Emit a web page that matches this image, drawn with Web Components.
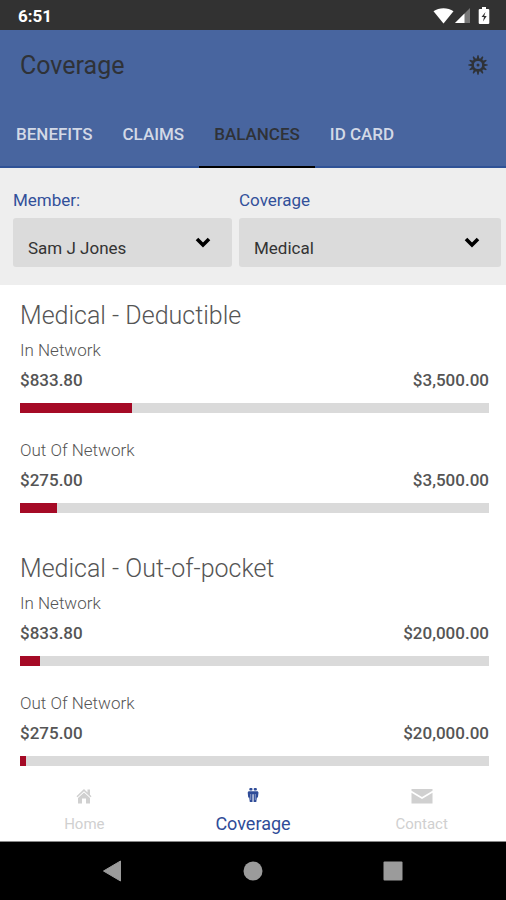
<!DOCTYPE html>
<html lang="en">
<head>
<meta charset="utf-8">
<meta name="viewport" content="width=device-width, initial-scale=1">
<title>Coverage</title>
<style>
  html, body { margin: 0; height: 100%; }
  body { font-family: Roboto, "Liberation Sans", sans-serif; background: #fff; }
</style>
</head>
<body>
<coverage-app>
  <status-bar slot="top" time="6:51"></status-bar>
  <app-header slot="top" heading="Coverage">
    <tab-link>BENEFITS</tab-link>
    <tab-link>CLAIMS</tab-link>
    <tab-link active>BALANCES</tab-link>
    <tab-link>ID CARD</tab-link>
  </app-header>
  <filter-bar slot="top">
    <select-field label="Member:" value="Sam J Jones"></select-field>
    <select-field label="Coverage" value="Medical"></select-field>
  </filter-bar>

  <balance-section heading="Medical - Deductible">
    <balance-meter label="In Network" used="833.80" total="3500"></balance-meter>
    <balance-meter label="Out Of Network" used="275.00" total="3500"></balance-meter>
  </balance-section>
  <balance-section heading="Medical - Out-of-pocket">
    <balance-meter label="In Network" used="833.80" total="20000"></balance-meter>
    <balance-meter label="Out Of Network" used="275.00" total="20000"></balance-meter>
  </balance-section>

  <bottom-nav slot="bottom">
    <nav-item label="Home">
      <svg width="16" height="16" viewBox="0 0 16 16" fill="currentColor"><path d="M8 1 .5 8.300l1 1L8 3.200l6.500 6.100 1-1-1.500-1.500V1.500h-2.500v2.900z"/><path d="M8 4.400 2 10v5.500h4v-5h4v5h4V10z"/></svg>
    </nav-item>
    <nav-item label="Coverage" active>
      <svg width="12" height="16" viewBox="0 0 12 16" fill="currentColor"><rect x="2.300" y="0" width="3.200" height="2.400" rx="1"/><rect x="6.700" y="0" width="3.200" height="2.400" rx="1"/><path d="M1.500 3.200h9.200l.8 1.300-.6 5h-1L9.300 14H6.600V6.200H5.500V14H2.800L2.200 9.500h-1l-.5-5z"/><path d="M3.700 6v6M8.300 6v6" stroke="#fff" stroke-width=".7" opacity=".6"/></svg>
    </nav-item>
    <nav-item label="Contact">
      <svg width="22" height="16" viewBox="0 0 22 16" fill="currentColor"><path d="M.5 1h21v1.700L11 9 .5 2.700z"/><path d="M.5 4.700 11 11l10.500-6.300V15.500H.5z"/></svg>
    </nav-item>
  </bottom-nav>
  <system-nav slot="bottom"></system-nav>
</coverage-app>

<script>
(function() {
  class BaseElement extends HTMLElement {
    constructor() {
      super();
      this.attachShadow({ mode: 'open' });
    }

    connectedCallback() {
      this.shadowRoot.innerHTML = this.render();
    }
  }

  class CoverageApp extends BaseElement {
    render() {
      return `
        <style>
          :host { display: flex; flex-direction: column; height: 100vh; }
          main { flex: 1; min-height: 0; overflow: hidden; padding: 13px 17px 0 20px; }
        </style>
        <slot name="top"></slot>
        <main><slot></slot></main>
        <slot name="bottom"></slot>
      `;
    }
  }

  class StatusBar extends BaseElement {
    render() {
      return `
        <style>
          :host {
            display: flex;
            align-items: center;
            justify-content: space-between;
            height: 30px;
            flex: none;
            box-sizing: border-box;
            padding: 1px 16px 0 18px;
            background: #323232;
            color: #fff;
            font-size: 17px;
            font-weight: 700;
          }
          .icons { display: flex; align-items: center; }
          svg { display: block; }
          .signal { margin-right: 7px; }
        </style>
        <span>${this.getAttribute('time')}</span>
        <div class="icons">
          <svg width="21" height="16" viewBox="0 0 21 16"><path d="M.5 3.200C6-.7 15-.7 20.500 3.200L10.500 15.500z" fill="#fff"/></svg>
          <svg class="signal" width="17" height="16" viewBox="0 0 17 16"><path d="M16 0v15H1z" fill="#777"/><path d="M10.500 5.500V15H1z" fill="#fff"/></svg>
          <svg width="12" height="17" viewBox="0 0 12 17"><path d="M4 0h4v2h2.500l.8.800v13.400l-.8.800h-9l-.8-.8V2.800l.8-.8H4z" fill="#fff"/><path d="M7.500 5 3.500 10H6l-1 4.500L8.700 9H6.200z" fill="#323232"/></svg>
        </div>
      `;
    }
  }

  class AppHeader extends BaseElement {
    render() {
      let teeth = '';
      for (let a = 0; a < 360; a += 30) {
        teeth += `<path d="M8.700 4 9.400.3h1.200l.7 3.700z" transform="rotate(${a} 10 10)"/>`;
      }
      return `
        <style>
          :host { display: block; flex: none; background: #48659f; color: #2f3237; }
          .title { display: flex; align-items: center; justify-content: space-between; height: 70px; padding: 0 18px 0 20px; }
          h1 { margin: 0; padding-top: 2px; font-size: 25px; font-weight: 400; line-height: 32px; }
          button { display: block; padding: 0; border: 0; background: none; color: inherit; }
          svg { display: block; }
          nav { display: flex; height: 68px; padding-left: 1px; box-shadow: inset 0 -2px #2f5296; }
        </style>
        <div class="title">
          <h1>${this.getAttribute('heading')}</h1>
          <button type="button" aria-label="Settings">
            <svg width="20" height="20" viewBox="0 0 20 20" fill="currentColor">
              ${teeth}
              <circle cx="10" cy="10" r="5.400" fill="none" stroke="currentColor" stroke-width="2.600"/>
              <circle cx="10" cy="10" r="1.500"/>
            </svg>
          </button>
        </div>
        <nav><slot></slot></nav>
      `;
    }
  }

  class TabLink extends BaseElement {
    render() {
      return `
        <style>
          :host { display: block; }
          a {
            display: flex;
            align-items: center;
            box-sizing: border-box;
            height: 100%;
            padding: 2px 15px 0;
            border-bottom: 2px solid transparent;
            color: #d3d9e6;
            font-size: 17px;
            font-weight: 500;
            text-decoration: none;
          }
          :host([active]) a { color: #2f3237; border-color: #000; }
        </style>
        <a href="#"><slot></slot></a>
      `;
    }
  }

  class FilterBar extends BaseElement {
    render() {
      return `
        <style>
          :host { display: grid; grid-template-columns: 219fr 262fr; gap: 7px; flex: none; padding: 20px 5px 18px 13px; background: #eee; }
        </style>
        <slot></slot>
      `;
    }
  }

  class SelectField extends BaseElement {
    render() {
      return `
        <style>
          :host { display: block; }
          label { display: block; height: 30px; color: #32509a; font-size: 17px; font-weight: 400; line-height: 24px; }
          .box { display: grid; align-items: center; }
          .box > * { grid-area: 1 / 1; }
          select {
            appearance: none;
            width: 100%;
            height: 49px;
            padding: 10px 15px 0;
            border: 0;
            border-radius: 3px;
            background: #dbdbdb;
            color: #333;
            font: 400 17px Roboto, "Liberation Sans", sans-serif;
          }
          svg { justify-self: end; margin-right: 21px; pointer-events: none; }
        </style>
        <label for="field">${this.getAttribute('label')}</label>
        <div class="box">
          <select id="field"><option>${this.getAttribute('value')}</option></select>
          <svg width="16" height="12" viewBox="0 0 16 12" fill="none" stroke="#000" stroke-width="3.600"><path d="M2 2 8 8l6-6"/></svg>
        </div>
      `;
    }
  }

  class BalanceSection extends BaseElement {
    render() {
      return `
        <style>
          :host { display: block; padding-bottom: 17px; }
          h2 { margin: 0; color: #555; font-size: 25px; font-weight: 300; line-height: 36px; }
        </style>
        <h2>${this.getAttribute('heading')}</h2>
        <slot></slot>
      `;
    }
  }

  class BalanceMeter extends BaseElement {
    money(value) {
      return '$' + value.toLocaleString('en-US', { minimumFractionDigits: 2 });
    }

    render() {
      const used = parseFloat(this.getAttribute('used'));
      const total = parseFloat(this.getAttribute('total'));
      return `
        <style>
          :host { display: block; padding-bottom: 21px; color: #555; font-size: 17px; line-height: 30px; }
          .label { height: 31px; line-height: 32px; font-weight: 300; }
          .amounts { display: flex; justify-content: space-between; height: 38px; font-weight: 500; }
          .track { height: 10px; background: #dadada; }
          .fill { height: 100%; min-width: 6px; background: #a50a26; }
        </style>
        <div class="label">${this.getAttribute('label')}</div>
        <div class="amounts"><span>${this.money(used)}</span><span>${this.money(total)}</span></div>
        <div class="track"><div class="fill" style="width:${used / total * 100}%"></div></div>
      `;
    }
  }

  class BottomNav extends BaseElement {
    render() {
      return `
        <style>
          :host { display: grid; grid-template-columns: repeat(3, 1fr); flex: none; height: 75px; background: #fff; border-bottom: 1px solid #888; }
        </style>
        <slot></slot>
      `;
    }
  }

  class NavItem extends BaseElement {
    render() {
      return `
        <style>
          :host { display: block; color: #d0d0d0; font-size: 15px; }
          :host([active]) { color: #2f4c98; font-size: 18px; }
          a { display: flex; flex-direction: column; align-items: center; gap: 8px; padding-top: 22px; color: inherit; text-decoration: none; line-height: 24px; }
          ::slotted(svg) { display: block; }
        </style>
        <a href="#"><slot></slot><span>${this.getAttribute('label')}</span></a>
      `;
    }
  }

  class SystemNav extends BaseElement {
    render() {
      return `
        <style>
          :host { display: flex; align-items: center; justify-content: center; gap: 118px; flex: none; height: 58px; background: #000; }
          button { display: block; padding: 0; border: 0; background: none; }
          svg { display: block; }
        </style>
        <button type="button" aria-label="Back"><svg width="22" height="22" viewBox="0 0 22 22" fill="#9b9b9b"><path d="M1.500 11 18.500 1v20z" stroke="#9b9b9b" stroke-linejoin="round"/></svg></button>
        <button type="button" aria-label="Home"><svg width="22" height="22" viewBox="0 0 22 22" fill="#9b9b9b"><circle cx="11" cy="11" r="9.500"/></svg></button>
        <button type="button" aria-label="Recent apps"><svg width="22" height="22" viewBox="0 0 22 22" fill="#9b9b9b"><rect x="1.500" y="1.500" width="19" height="19" rx="1"/></svg></button>
      `;
    }
  }

  customElements.define('coverage-app', CoverageApp);
  customElements.define('status-bar', StatusBar);
  customElements.define('app-header', AppHeader);
  customElements.define('tab-link', TabLink);
  customElements.define('filter-bar', FilterBar);
  customElements.define('select-field', SelectField);
  customElements.define('balance-section', BalanceSection);
  customElements.define('balance-meter', BalanceMeter);
  customElements.define('bottom-nav', BottomNav);
  customElements.define('nav-item', NavItem);
  customElements.define('system-nav', SystemNav);
})();
</script>
</body>
</html>
